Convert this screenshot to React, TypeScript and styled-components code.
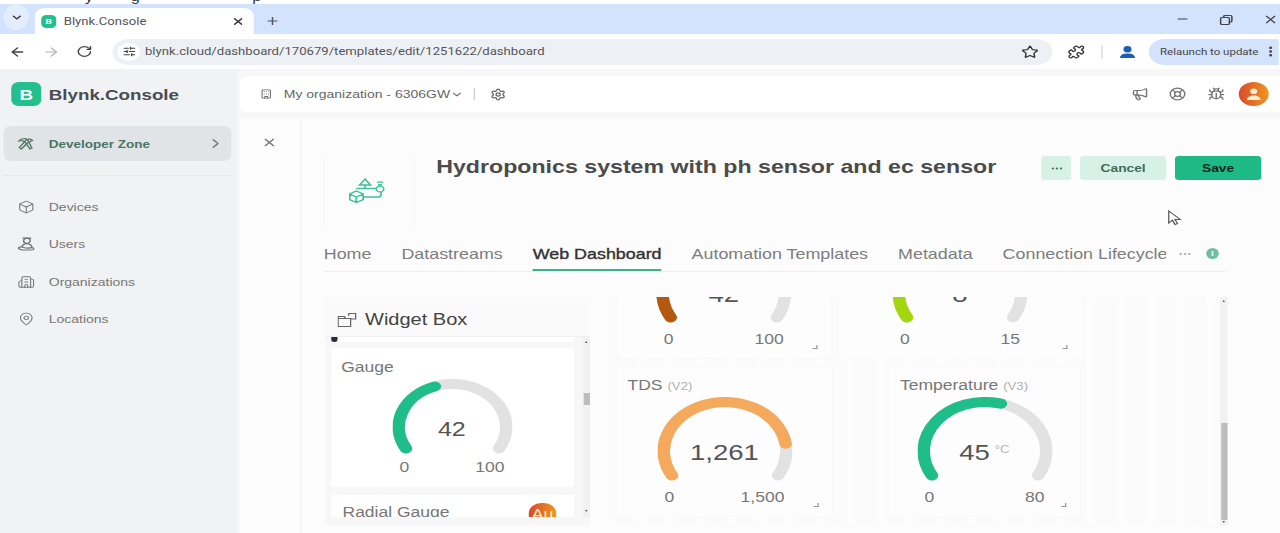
import React from 'react';
import styled, { createGlobalStyle } from 'styled-components';
import {
  ArrowLeft,
  ArrowRight,
  Box,
  Bug,
  Building,
  Building2,
  ChevronDown,
  ChevronRight,
  LifeBuoy,
  MapPin,
  Megaphone,
  Minus,
  MoreHorizontal,
  MoreVertical,
  Plus,
  Puzzle,
  RotateCw,
  Settings,
  SlidersHorizontal,
  Star,
  X,
} from 'lucide-react';

const GlobalStyle = createGlobalStyle`
  html, body {
    margin: 0;
    height: 533px;
    overflow: hidden;
    background: #fff;
  }
  * { box-sizing: border-box; }
`;

/* the source video was stretched sideways by 1.25, so everything is laid out at 1024 wide */
const Stage = styled.div`
  position: relative;
  width: 1024px;
  height: 533px;
  overflow: hidden;
  transform: scaleX(1.25);
  transform-origin: 0 0;
  display: flex;
  flex-direction: column;
  font-family: 'Liberation Sans', Arial, sans-serif;
  color: #555;
`;

const CaptionStrip = styled.div`
  height: 4px;
  overflow: hidden;
  background: #fff;
  padding-left: 68px;
  display: flex;
  gap: 30px;
  font-size: 13px;
  color: #333;
  & > span {
    margin-top: -11px;
  }
`;

const TabBar = styled.div`
  height: 30px;
  flex-shrink: 0;
  background: #d3e3fd;
  display: flex;
  align-items: flex-end;
  color: #333;
`;

const TabSwitch = styled.div`
  width: 20px;
  height: 26px;
  margin: 0 0 4px 3px;
  border-radius: 50%;
  background: #e4edfb;
  display: flex;
  align-items: center;
  justify-content: center;
`;

const BrowserTab = styled.div`
  width: 175px;
  height: 26px;
  margin-left: 5px;
  padding: 0 7px 0 5px;
  background: #fff;
  border-radius: 8px 8px 0 0;
  display: flex;
  align-items: center;
  font-family: Roboto, sans-serif;
  font-size: 10.5px;
  color: #555;
`;

const Favicon = styled.span`
  width: 12px;
  height: 13px;
  border-radius: 4px;
  margin-right: 6px;
  background: #24bf8d;
  color: #fff;
  font-size: 8px;
  font-weight: 700;
  display: flex;
  align-items: center;
  justify-content: center;
`;

const TabTitle = styled.span`
  flex: 1;
`;

const NewTab = styled.span`
  margin: 0 0 7px 9px;
  display: flex;
  color: #555;
`;

const WindowControls = styled.div`
  margin: 0 1.5px 7px auto;
  display: flex;
  gap: 22px;
  color: #444;
`;

const RestoreIcon = () => (
  <svg width="14" height="14" viewBox="0 0 14 14" fill="none" stroke="currentColor" strokeWidth="1.2">
    <rect x="2.5" y="4.5" width="7" height="7" rx="1" />
    <path d="M5 4.5V3.5a1 1 0 0 1 1-1h4.5a1 1 0 0 1 1 1V8a1 1 0 0 1-1 1h-1" />
  </svg>
);

const Toolbar = styled.div`
  height: 35px;
  flex-shrink: 0;
  background: #fff;
  display: flex;
  align-items: center;
  color: #444;
`;

const NavButton = styled.span<{ $faded?: boolean }>`
  width: 27px;
  display: flex;
  justify-content: center;
  color: ${(p) => (p.$faded ? '#b5b5b5' : '#444')};
`;

const AddressBar = styled.div`
  width: 752px;
  height: 26px;
  margin-left: 9px;
  padding: 0 11px 0 4px;
  border-radius: 13px;
  background: #edf1f6;
  display: flex;
  align-items: center;
`;

const SiteInfo = styled.span`
  width: 18px;
  height: 18px;
  border-radius: 50%;
  background: #fff;
  display: flex;
  align-items: center;
  justify-content: center;
  color: #444;
`;

const Url = styled.span`
  flex: 1;
  margin-left: 4px;
  font-family: Roboto, sans-serif;
  font-size: 10.5px;
  color: #555;
`;

const ToolIcons = styled.div`
  display: flex;
  align-items: center;
  margin-left: 12px;
  color: #444;
`;

const ToolDivider = styled.span`
  width: 1px;
  height: 14px;
  margin: 0 12px 0 13px;
  background: #d8d8d8;
`;

const ProfileDot = () => (
  <svg width="16" height="16" viewBox="0 0 16 16" fill="#1a5fb4">
    <circle cx="8" cy="5.2" r="3.2" />
    <path d="M2 14c0-3.2 2.6-4.6 6-4.6s6 1.4 6 4.6z" />
  </svg>
);

const RelaunchPill = styled.div`
  width: 104px;
  height: 26px;
  margin-left: 9px;
  padding-left: 9px;
  border-radius: 13px 0 0 13px;
  background: #d3e3fd;
  display: flex;
  align-items: center;
  justify-content: space-between;
  font-family: Roboto, sans-serif;
  font-size: 9.2px;
  color: #444;
`;

const Shell = styled.div`
  flex: 1;
  min-height: 0;
  display: flex;
  background: #f7f7f8;
`;

const Sidebar = styled.aside`
  width: 190px;
  flex-shrink: 0;
  padding: 13px 5px 0 3px;
  background: #f0f2f4;
`;

const Brand = styled.div`
  display: flex;
  align-items: center;
  padding-left: 6px;
  height: 24px;
  font-size: 15px;
  font-weight: 700;
  color: #4a4d50;
`;

const BrandMark = styled.span`
  width: 24px;
  height: 24px;
  margin-right: 6px;
  border-radius: 6px;
  background: #24bf8d;
  color: #fff;
  font-size: 15px;
  display: flex;
  align-items: center;
  justify-content: center;
`;

const ZoneLink = styled.div`
  height: 35px;
  margin-top: 20px;
  padding: 0 5px 0 11px;
  border-radius: 6px;
  background: #e1e4e6;
  display: flex;
  align-items: center;
  gap: 12px;
  font-size: 10.8px;
  font-weight: 700;
  color: #4a7565;
`;

const ZoneLabel = styled.span`
  flex: 1;
`;

const ToolsIcon = () => (
  <svg width="13" height="13" viewBox="0 0 13 13" fill="none" stroke="#55796b" strokeWidth="1.2">
    <path d="M1 4c2-2.500 5-3 7-1.500L11.500 11 10 12 6 5C4.500 3.800 2.500 3.500 1 4z" />
    <path d="M12 3.500C10.500 2 8.500 2 7 3L1.500 10.500 3 12l5.500-6.500c1-.8 2.300-1.500 3.500-2z" />
  </svg>
);

const PersonHandIcon = () => (
  <svg width="14" height="14" viewBox="0 0 14 14" fill="none" stroke="#777" strokeWidth="1.2">
    <circle cx="7.500" cy="3.800" r="2.600" />
    <path d="M4 1.200h7M3.500 10c.5-2.200 2-3.300 4-3.300s3.500 1.200 4 3.300" />
    <path d="M1 10.500c1.500-.8 2.500-.8 4 0 1.500.8 5 .6 6.500.2.900-.2 1.500.4 1.500 1.100 0 .8-.6 1.200-1.500 1.200H4c-1.500 0-2.300-.6-3-1.200z" />
  </svg>
);

const SideDivider = styled.div`
  height: 1px;
  margin: 14px 0 12px;
  background: #e6e8ea;
`;

const NavItem = styled.div`
  height: 37.5px;
  padding-left: 11px;
  display: flex;
  align-items: center;
  gap: 11px;
  font-size: 11.2px;
  color: #777;
`;

const RightColumn = styled.div`
  flex: 1;
  min-width: 0;
  padding: 7px 0 0 2px;
  display: flex;
  flex-direction: column;
`;

const OrgBar = styled.header`
  height: 36px;
  flex-shrink: 0;
  padding: 0 9px 0 16px;
  border-radius: 6px 0 0 6px;
  background: #fff;
  display: flex;
  align-items: center;
  font-size: 11.2px;
  color: #666;
`;

const OrgName = styled.span`
  margin-left: 9px;
`;

const OrgDivider = styled.span`
  width: 1px;
  height: 12px;
  margin: 0 12px 0 8px;
  background: #ccc;
`;

const OrgActions = styled.div`
  margin-left: auto;
  display: flex;
  align-items: center;
  gap: 16.4px;
  color: #777;
`;

const Avatar = styled.span`
  width: 24px;
  height: 24px;
  margin-left: -5px;
  border-radius: 50%;
  background: linear-gradient(90deg, #d9492e, #ee9720);
  display: flex;
  align-items: center;
  justify-content: center;
`;

const Workspace = styled.div`
  flex: 1;
  min-height: 0;
  margin-top: 6px;
  display: flex;
  background: #fcfcfc;
`;

const CloseColumn = styled.div`
  width: 49px;
  flex-shrink: 0;
  padding: 17px 0 0 17px;
  border-right: 1px solid #f5f5f5;
  color: #777;
`;

const Main = styled.main`
  flex: 1;
  min-width: 0;
  padding: 38px 0 0 18px;
  display: flex;
  flex-direction: column;
`;

const TitleRow = styled.div`
  height: 72px;
  flex-shrink: 0;
  padding-right: 15px;
  display: flex;
`;

const TemplateLogo = styled.div`
  width: 72px;
  border-left: 1px solid #f8f8f8;
  border-right: 1px solid #f7f7f7;
  display: flex;
  align-items: center;
  justify-content: center;
  padding-bottom: 4px;
`;

const TemplateIcon = () => (
  <svg width="32" height="28" viewBox="0 0 32 28" fill="none" stroke="#3cc197" strokeWidth="1.3">
    <path d="M13 3l4.5 6h-9zM13 9v3.5M6 12.5h16" />
    <circle cx="25" cy="13" r="3" />
    <path d="M22.5 6.5c1.500-.8 3.500-.8 5 0M23.500 8.800c1-.4 2-.4 3 0" />
    <path d="M6 15l5.500 3v5.500L6 26.500.8 23.500V18zM.8 18L6 21l5.500-3M6 21v5.500" />
    <path d="M11.500 21h12c1.500 0 2.500-1 2.500-3v-2" />
  </svg>
);

const Title = styled.h1`
  flex: 1;
  margin: 0 0 0 18px;
  font-size: 18.55px;
  line-height: 22px;
  font-weight: 700;
  color: #4b4b4b;
`;

const ActionGroup = styled.div`
  display: flex;
  gap: 7px;
`;

const ActionButton = styled.button<{ $kind: 'more' | 'cancel' | 'save' }>`
  width: ${(p) => (p.$kind === 'more' ? 24 : 69)}px;
  height: 24px;
  padding: 0;
  border: 0;
  border-radius: 3px;
  font-family: inherit;
  font-size: 11px;
  font-weight: 700;
  display: flex;
  align-items: center;
  justify-content: center;
  background: ${(p) => (p.$kind === 'save' ? '#1fb985' : '#d8f1e7')};
  color: ${(p) => (p.$kind === 'save' ? '#10261f' : '#3a6f5c')};
`;

const TabRow = styled.nav`
  height: 44px;
  width: 722px;
  flex-shrink: 0;
  border-bottom: 1px solid #eeeeee;
  display: flex;
  align-items: stretch;
`;

const TabList = styled.div`
  width: 674px;
  overflow: hidden;
  display: flex;
  gap: 24px;
`;

const TabLink = styled.span<{ $active?: boolean }>`
  flex-shrink: 0;
  padding-top: 18px;
  font-size: 14.3px;
  white-space: nowrap;
  color: ${(p) => (p.$active ? '#333' : '#7d7d7d')};
  border-bottom: 2px solid ${(p) => (p.$active ? '#3bb28d' : 'transparent')};
  -webkit-text-stroke: ${(p) => (p.$active ? '0.35px #333' : '0')};
`;

const TabExtras = styled.div`
  padding: 20px 0 0 9px;
  display: flex;
  align-items: flex-start;
  gap: 11px;
  color: #aaa;
`;

const InfoDot = styled.span`
  width: 10px;
  height: 11px;
  border-radius: 50%;
  background: #6dbfa3;
  color: #fff;
  font-size: 8px;
  font-weight: 700;
  display: flex;
  align-items: center;
  justify-content: center;
`;

const PanelRow = styled.div`
  flex: 1;
  min-height: 0;
  margin: 25px 0 0 1px;
  display: flex;
  gap: 20px;
`;

const WidgetBox = styled.section`
  width: 212px;
  height: 228px;
  flex-shrink: 0;
  background: #f7f7f7;
`;

const WidgetHead = styled.div`
  height: 40px;
  padding: 6px 0 0 10px;
  display: flex;
  align-items: center;
  gap: 6px;
  background: #fafafa;
  border-bottom: 1px solid #efefef;
  font-size: 16px;
  color: #444;
`;

const WidgetBody = styled.div`
  height: 180px;
  display: flex;
`;

const WidgetList = styled.div`
  flex: 1;
  min-width: 0;
  padding-left: 5px;
  overflow: hidden;
  display: flex;
  flex-direction: column;
  gap: 6px;
`;

const PrevCardEdge = styled.div`
  width: 194px;
  height: 5px;
  flex-shrink: 0;
  background: #fff;
`;

const PrevCardMark = styled.div`
  width: 5px;
  height: 5px;
  border-radius: 0 0 3px 3px;
  background: #2a2a3a;
`;

const ListCard = styled.article`
  width: 194px;
  height: 139px;
  flex-shrink: 0;
  padding: 11px 9px 0 8px;
  background: #fff;
  border-radius: 2px;
`;

const RadialCard = styled.article`
  width: 194px;
  height: 40px;
  flex-shrink: 0;
  margin-top: 2px;
  padding: 9px 14px 0 9px;
  background: #fff;
  display: flex;
  align-items: flex-start;
  justify-content: space-between;
  font-size: 14px;
  color: #777;
`;

const ProBadge = styled.span`
  width: 22px;
  height: 22px;
  margin-top: -1px;
  border-radius: 10px;
  background: linear-gradient(90deg, #d9492e, #ee9720);
  color: #fff3c4;
  font-size: 14px;
  text-align: center;
  line-height: 22px;
`;

const MiniBar = styled.div<{ $thumbTop: number; $thumbHeight: number }>`
  position: relative;
  flex-shrink: 0;
  width: 6px;
  background: #f1f1f1;
  &::after {
    content: '';
    position: absolute;
    left: 0.5px;
    right: 0.5px;
    top: ${(p) => p.$thumbTop}px;
    height: ${(p) => p.$thumbHeight}px;
    background: #bdbdbd;
  }
`;

const BarArrow = styled.span<{ $down?: boolean; $offset: number }>`
  position: absolute;
  left: 1.5px;
  ${(p) => (p.$down ? 'bottom' : 'top')}: ${(p) => p.$offset}px;
  border-left: 1.5px solid transparent;
  border-right: 1.5px solid transparent;
  ${(p) => (p.$down ? 'border-top' : 'border-bottom')}: 2px solid #555;
`;

const CanvasArea = styled.section`
  width: 490px;
  flex-shrink: 0;
  display: flex;
  padding-bottom: 8px;
`;

const CanvasGrid = styled.div`
  flex: 1;
  min-width: 0;
  overflow: hidden;
  padding-bottom: 9px;
  display: flex;
  flex-direction: column;
  justify-content: flex-end;
  gap: 9px;
  background: repeating-linear-gradient(90deg, #fbfbfb 0 17px, #fdfdfd 17px 24px);
`;

const CanvasRow = styled.div<{ $gap: number }>`
  flex-shrink: 0;
  display: flex;
  gap: ${(p) => p.$gap}px;
  padding-left: 1px;
`;

const GaugeCard = styled.article<{ $width: number }>`
  position: relative;
  width: ${(p) => p.$width}px;
  height: 149px;
  padding: 10px 9px 0;
  background: #fdfdfd;
  box-shadow: 0 0 1px #f0f0f0;
`;

const CardTitle = styled.div`
  height: 16px;
  font-size: 14px;
  line-height: 16px;
  color: #777;
`;

const PinTag = styled.span`
  margin-left: 4px;
  font-size: 10.5px;
  color: #b0b0b0;
`;

const ResizeGrip = styled.span`
  position: absolute;
  right: 11px;
  bottom: 9px;
  width: 4px;
  height: 4px;
  border-right: 1px solid #999;
  border-bottom: 1px solid #999;
`;

const GaugeWrap = styled.div<{ $size: number }>`
  position: relative;
  width: ${(p) => p.$size}px;
  margin: 4px auto 0;
`;

const GaugeSvg = styled.svg`
  display: block;
`;

const GaugeValue = styled.div<{ $size: number; $font: number }>`
  position: absolute;
  left: 0;
  right: 0;
  top: ${(p) => p.$size / 2 - 10}px;
  height: 24px;
  line-height: 24px;
  text-align: center;
  font-size: ${(p) => p.$font}px;
  color: #555;
`;

const GaugeUnit = styled.sup`
  margin-left: 4px;
  font-size: 10.5px;
  line-height: 0;
  vertical-align: 7px;
  color: #b5b5b5;
`;

const ScaleRow = styled.div<{ $size: number; $top: number }>`
  width: ${(p) => p.$size}px;
  margin: ${(p) => p.$top}px auto 0;
  padding: 0 6px;
  display: flex;
  justify-content: space-between;
  font-size: 14px;
  line-height: 16px;
  color: #777;
`;

const CursorMark = styled.svg`
  position: absolute;
  left: 934px;
  top: 210px;
`;

const polar = (size: number, r: number, deg: number) => {
  const a = ((deg - 90) * Math.PI) / 180;
  return [size / 2 + r * Math.cos(a), size / 2 + r * Math.sin(a)];
};

const arcPath = (size: number, r: number, from: number, to: number) => {
  const [x1, y1] = polar(size, r, from);
  const [x2, y2] = polar(size, r, to);
  return `M${x1} ${y1}A${r} ${r} 0 ${to - from > 180 ? 1 : 0} 1 ${x2} ${y2}`;
};

interface GaugeProps {
  size: number;
  fraction: number;
  color: string;
  value: string;
  unit?: string;
  font: number;
  min: string;
  max: string;
  scaleTop: number;
}

const Gauge = ({ size, fraction, color, value, unit, font, min, max, scaleTop }: GaugeProps) => {
  const stroke = 10;
  const r = size / 2 - stroke / 2;
  const height = size / 2 + r * 0.5 + stroke / 2;
  return (
    <>
      <GaugeWrap $size={size}>
        <GaugeSvg width={size} height={height} fill="none" strokeWidth={stroke} strokeLinecap="round">
          <path d={arcPath(size, r, -120, 120)} stroke="#e2e2e2" />
          <path d={arcPath(size, r, -120, -120 + 240 * fraction)} stroke={color} />
        </GaugeSvg>
        <GaugeValue $size={size} $font={font}>
          {value}
          {unit && <GaugeUnit>{unit}</GaugeUnit>}
        </GaugeValue>
      </GaugeWrap>
      <ScaleRow $size={size} $top={scaleTop}>
        <span>{min}</span>
        <span>{max}</span>
      </ScaleRow>
    </>
  );
};

const dashboardRows = [
  {
    gap: 6,
    cards: [
      { width: 172, title: 'pH', pin: '(V0)', fraction: 0.42, color: '#b5590f', value: '42', max: '100' },
      { width: 194, title: 'EC', pin: '(V1)', fraction: 0.53, color: '#a3d60d', value: '8', max: '15' },
    ],
  },
  {
    gap: 45,
    cards: [
      { width: 173, title: 'TDS', pin: '(V2)', fraction: 0.84, color: '#f5a95c', value: '1,261', max: '1,500' },
      { width: 153, title: 'Temperature', pin: '(V3)', fraction: 0.5625, color: '#1fbd88', value: '45', unit: '°C', max: '80' },
    ],
  },
];

const tabs = ['Home', 'Datastreams', 'Web Dashboard', 'Automation Templates', 'Metadata', 'Connection Lifecycle'];

const App = () => (
  <>
    <GlobalStyle />
    <Stage>
      <CaptionStrip>
        <span>y</span>
        <span>g</span>
        <span />
        <span />
        <span>p</span>
      </CaptionStrip>
      <TabBar>
        <TabSwitch>
          <ChevronDown size={11} strokeWidth={3} />
        </TabSwitch>
        <BrowserTab>
          <Favicon>B</Favicon>
          <TabTitle>Blynk.Console</TabTitle>
          <X size={11} strokeWidth={2.6} color="#333" />
        </BrowserTab>
        <NewTab>
          <Plus size={12} strokeWidth={2.4} />
        </NewTab>
        <WindowControls>
          <Minus size={12} />
          <RestoreIcon />
          <X size={13} />
        </WindowControls>
      </TabBar>
      <Toolbar>
        <NavButton>
          <ArrowLeft size={14} strokeWidth={2.2} />
        </NavButton>
        <NavButton $faded>
          <ArrowRight size={14} />
        </NavButton>
        <NavButton>
          <RotateCw size={13} strokeWidth={2.2} />
        </NavButton>
        <AddressBar>
          <SiteInfo>
            <SlidersHorizontal size={11} strokeWidth={2.4} />
          </SiteInfo>
          <Url>blynk.cloud/dashboard/170679/templates/edit/1251622/dashboard</Url>
          <Star size={14} strokeWidth={2} color="#333" />
        </AddressBar>
        <ToolIcons>
          <Puzzle size={14} strokeWidth={2} color="#333" />
          <ToolDivider />
          <ProfileDot />
        </ToolIcons>
        <RelaunchPill>
          Relaunch to update
          <MoreVertical size={13} strokeWidth={2.6} />
        </RelaunchPill>
      </Toolbar>
      <Shell>
        <Sidebar>
          <Brand>
            <BrandMark>B</BrandMark>
            Blynk.Console
          </Brand>
          <ZoneLink>
            <ToolsIcon />
            <ZoneLabel>Developer Zone</ZoneLabel>
            <ChevronRight size={15} color="#777" />
          </ZoneLink>
          <SideDivider />
          <NavItem>
            <Box size={14} strokeWidth={1.5} color="#777" />
            Devices
          </NavItem>
          <NavItem>
            <PersonHandIcon />
            Users
          </NavItem>
          <NavItem>
            <Building2 size={14} strokeWidth={1.5} color="#777" />
            Organizations
          </NavItem>
          <NavItem>
            <MapPin size={14} strokeWidth={1.5} color="#777" />
            Locations
          </NavItem>
        </Sidebar>
        <RightColumn>
          <OrgBar>
            <Building size={10} />
            <OrgName>My organization - 6306GW</OrgName>
            <ChevronDown size={11} />
            <OrgDivider />
            <Settings size={13} />
            <OrgActions>
              <Megaphone size={14} />
              <LifeBuoy size={14} />
              <Bug size={14} />
              <Avatar>
                <svg width="14" height="14" viewBox="0 0 14 14" fill="#fdeccb">
                  <circle cx="7" cy="4.200" r="2.800" />
                  <path d="M1.500 13c0-3 2.500-4.500 5.500-4.500s5.500 1.500 5.500 4.500z" />
                </svg>
              </Avatar>
            </OrgActions>
          </OrgBar>
          <Workspace>
            <CloseColumn>
              <X size={13} />
            </CloseColumn>
            <Main>
              <TitleRow>
                <TemplateLogo>
                  <TemplateIcon />
                </TemplateLogo>
                <Title>Hydroponics system with ph sensor and ec sensor</Title>
                <ActionGroup>
                  <ActionButton $kind="more">
                    <MoreHorizontal size={11} strokeWidth={2} />
                  </ActionButton>
                  <ActionButton $kind="cancel">Cancel</ActionButton>
                  <ActionButton $kind="save">Save</ActionButton>
                </ActionGroup>
              </TitleRow>
              <TabRow>
                <TabList>
                  {tabs.map((tab) => (
                    <TabLink key={tab} $active={tab === 'Web Dashboard'}>
                      {tab}
                    </TabLink>
                  ))}
                </TabList>
                <TabExtras>
                  <MoreHorizontal size={12} />
                  <InfoDot>i</InfoDot>
                </TabExtras>
              </TabRow>
              <PanelRow>
                <WidgetBox>
                  <WidgetHead>
                    <svg width="16" height="14" viewBox="0 0 16 14" fill="none" stroke="#666" strokeWidth="1">
                      <path d="M.5 5.500h10v8H.5zM.5 5.500V3.500h5l1 2M9 3V.500h5.500V6H10.500" />
                    </svg>
                    Widget Box
                  </WidgetHead>
                  <WidgetBody>
                    <WidgetList>
                      <PrevCardEdge>
                        <PrevCardMark />
                      </PrevCardEdge>
                      <ListCard>
                        <CardTitle>Gauge</CardTitle>
                        <Gauge
                          size={96}
                          fraction={0.42}
                          color="#1fbd88"
                          value="42"
                          font={20}
                          min="0"
                          max="100"
                          scaleTop={5}
                        />
                      </ListCard>
                      <RadialCard>
                        Radial Gauge
                        <ProBadge>Au</ProBadge>
                      </RadialCard>
                    </WidgetList>
                    <MiniBar $thumbTop={56} $thumbHeight={12}>
                      <BarArrow $offset={4} />
                      <BarArrow $down $offset={5} />
                    </MiniBar>
                  </WidgetBody>
                </WidgetBox>
                <CanvasArea>
                  <CanvasGrid>
                    {dashboardRows.map((row) => (
                      <CanvasRow key={row.cards[0].title} $gap={row.gap}>
                        {row.cards.map((card) => (
                          <GaugeCard key={card.title} $width={card.width}>
                            <CardTitle>
                              {card.title}
                              <PinTag>{card.pin}</PinTag>
                            </CardTitle>
                            <Gauge
                              size={108}
                              fraction={card.fraction}
                              color={card.color}
                              value={card.value}
                              unit={card.unit}
                              font={22}
                              min="0"
                              max={card.max}
                              scaleTop={8}
                            />
                            <ResizeGrip />
                          </GaugeCard>
                        ))}
                      </CanvasRow>
                    ))}
                  </CanvasGrid>
                  <MiniBar $thumbTop={126} $thumbHeight={97}>
                    <BarArrow $offset={3} />
                    <BarArrow $down $offset={2} />
                  </MiniBar>
                </CanvasArea>
              </PanelRow>
            </Main>
          </Workspace>
        </RightColumn>
      </Shell>
      <CursorMark width="12" height="16" viewBox="0 0 12 16" fill="#fff" stroke="#555" strokeWidth="1">
        <path d="M1 1v12l3-2.800 2 4.300 2-.9-2-4.200h4.200z" />
      </CursorMark>
    </Stage>
  </>
);

export default App;
